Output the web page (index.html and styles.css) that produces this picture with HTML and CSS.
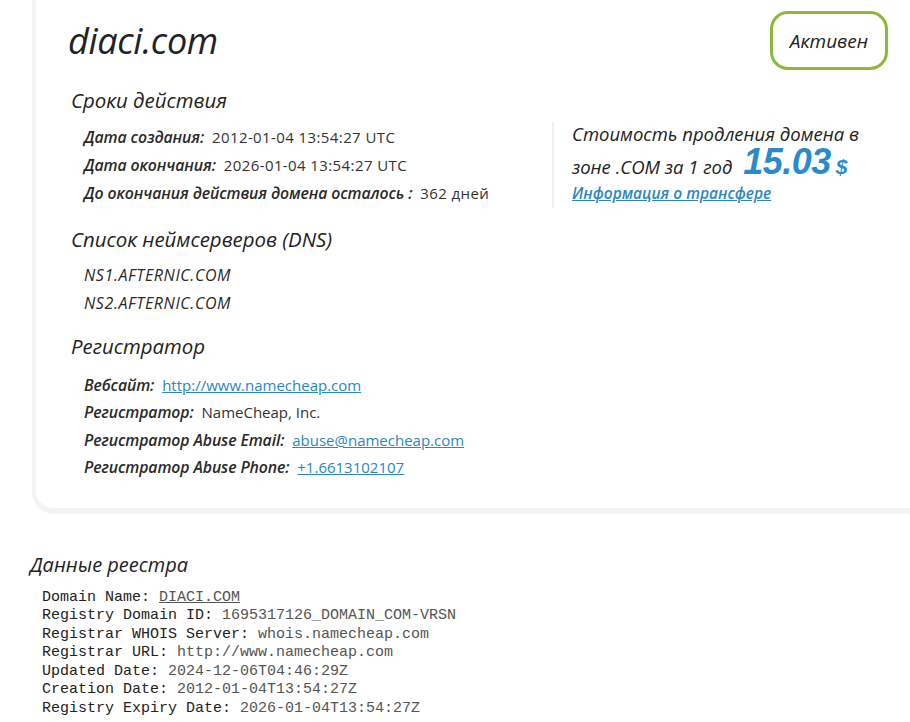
FILE: index.html
```html
<!DOCTYPE html>
<html lang="ru">
<head>
<meta charset="utf-8">
<title>diaci.com</title>
<link rel="stylesheet" href="styles.css">
</head>
<body>
<div class="card">
  <div class="card-head">
    <h1 class="domain">diaci.com</h1>
    <div class="badge">Активен</div>
  </div>

  <section class="sect">
    <h2 class="sect-title">Сроки действия</h2>
    <div class="terms">
      <ul class="rows">
        <li><span class="lbl">Дата создания:</span> <span class="val num">2012-01-04 13:54:27 UTC</span></li>
        <li><span class="lbl">Дата окончания:</span> <span class="val num">2026-01-04 13:54:27 UTC</span></li>
        <li><span class="lbl">До окончания действия домена осталось :</span> <span class="val num">362 дней</span></li>
      </ul>
      <div class="price">
        <p class="price-line">Стоимость продления домена в</p>
        <p class="price-line">зоне .COM за 1 год <span class="amount">15.03</span> <span class="cur">$</span></p>
        <a class="transfer" href="#">Информация о трансфере</a>
      </div>
    </div>
  </section>

  <section class="sect sect-dns">
    <h2 class="sect-title">Список неймсерверов (DNS)</h2>
    <ul class="rows">
      <li><span class="ns">NS1.AFTERNIC.COM</span></li>
      <li><span class="ns">NS2.AFTERNIC.COM</span></li>
    </ul>
  </section>

  <section class="sect sect-reg">
    <h2 class="sect-title">Регистратор</h2>
    <ul class="rows rows-reg">
      <li><span class="lbl">Вебсайт:</span> <a class="val link" href="#">http://www.namecheap.com</a></li>
      <li><span class="lbl">Регистратор:</span> <span class="val">NameCheap, Inc.</span></li>
      <li><span class="lbl">Регистратор Abuse Email:</span> <a class="val link" href="#">abuse@namecheap.com</a></li>
      <li><span class="lbl">Регистратор Abuse Phone:</span> <a class="val link" href="#">+1.6613102107</a></li>
    </ul>
  </section>
</div>

<section class="registry">
  <h2 class="registry-title">Данные реестра</h2>
  <pre class="raw"><b>Domain Name:</b> <a href="#">DIACI.COM</a>
<b>Registry Domain ID:</b> 1695317126_DOMAIN_COM-VRSN
<b>Registrar WHOIS Server:</b> whois.namecheap.com
<b>Registrar URL:</b> http://www.namecheap.com
<b>Updated Date:</b> 2024-12-06T04:46:29Z
<b>Creation Date:</b> 2012-01-04T13:54:27Z
<b>Registry Expiry Date:</b> 2026-01-04T13:54:27Z</pre>
</section>
</body>
</html>
```

FILE: styles.css
```css
* { box-sizing: border-box; }

html, body {
  margin: 0;
  padding: 0;
  background: #fff;
  overflow: hidden;
}

body {
  font-family: "Open Sans", "Noto Sans", sans-serif;
  color: #2a2a2a;
  width: 910px;
}

.card {
  margin-left: 32px;
  margin-right: -10px;
  border-left: 4px solid #f3f3f3;
  border-bottom: 6px solid #f3f3f3;
  border-bottom-left-radius: 22px;
  padding: 11px 32px 26px 32px;
}

.card-head {
  display: flex;
  justify-content: space-between;
  align-items: center;
}

.domain {
  margin: 0;
  font-size: 36px;
  font-style: italic;
  font-weight: 500;
  line-height: 44px;
  color: #222;
  letter-spacing: -0.3px;
}

.badge {
  height: 59px;
  width: 118px;
  border: 3px solid #8cb83a;
  border-radius: 18px;
  display: flex;
  align-items: center;
  justify-content: center;
  font-size: 19px;
  font-style: italic;
  font-weight: 500;
  color: #222;
}

.sect { margin-top: 16px; }
.sect-dns { margin-top: 17px; }
.sect-reg { margin-top: 15px; }

.sect-title {
  margin: 0 0 9px 3px;
  font-size: 20.4px;
  font-style: italic;
  font-weight: 400;
  line-height: 28px;
  color: #222;
}

.sect-dns .sect-title { margin-bottom: 8px; }
.sect-reg .sect-title { margin-bottom: 12px; }

.terms {
  display: flex;
  align-items: flex-start;
}

.rows {
  list-style: none;
  margin: 0;
  padding: 0 0 0 16px;
  flex: 1;
}

.rows li {
  line-height: 28px;
  font-size: 15px;
  white-space: nowrap;
}

.rows-reg li { line-height: 27.4px; }

.lbl {
  font-size: 15.8px;
  font-style: italic;
  font-weight: 600;
  color: #2a2a2a;
  letter-spacing: -0.1px;
}

.ns {
  font-size: 16px;
  font-style: italic;
  font-weight: 400;
  color: #2a2a2a;
  letter-spacing: 0.6px;
}

.val {
  color: #333;
  margin-left: 4px;
}

.num { letter-spacing: 0.4px; }

.link {
  color: #2d86c4;
  text-decoration: underline;
}

.price {
  width: 336px;
  margin-top: -1px;
  border-left: 2px solid #f0f0f0;
  padding-left: 18px;
  height: 86px;
}

.price-line {
  margin: 0;
  font-size: 18.5px;
  font-style: italic;
  font-weight: 500;
  line-height: 24px;
  color: #222;
  white-space: nowrap;
}

.price-line + .price-line {
  line-height: 30px;
  margin-top: 1px;
}

.amount {
  display: inline-block;
  font-family: "Liberation Sans", Arial, sans-serif;
  font-size: 36px;
  line-height: 30px;
  font-weight: 700;
  color: #2a8bcb;
  margin-left: 6px;
  letter-spacing: -0.5px;
}

.cur {
  font-family: "Liberation Sans", Arial, sans-serif;
  font-size: 21px;
  font-weight: 700;
  color: #2a8bcb;
}

.transfer {
  display: block;
  margin-top: 0;
  font-size: 15.5px;
  font-style: italic;
  font-weight: 600;
  line-height: 22px;
  color: #2d86c4;
  text-decoration: underline;
}

.registry {
  padding: 38px 0 0 30px;
}

.registry-title {
  margin: 0;
  font-size: 20px;
  font-style: italic;
  font-weight: 400;
  line-height: 26px;
  color: #222;
}

.raw {
  margin: 11px 0 0 12px;
  font-family: "Liberation Mono", "Courier New", monospace;
  font-size: 15px;
  line-height: 18.5px;
  color: #555;
}

.raw b {
  font-weight: 400;
  color: #222;
}

.raw a {
  color: #555;
  text-decoration: underline;
}
```
